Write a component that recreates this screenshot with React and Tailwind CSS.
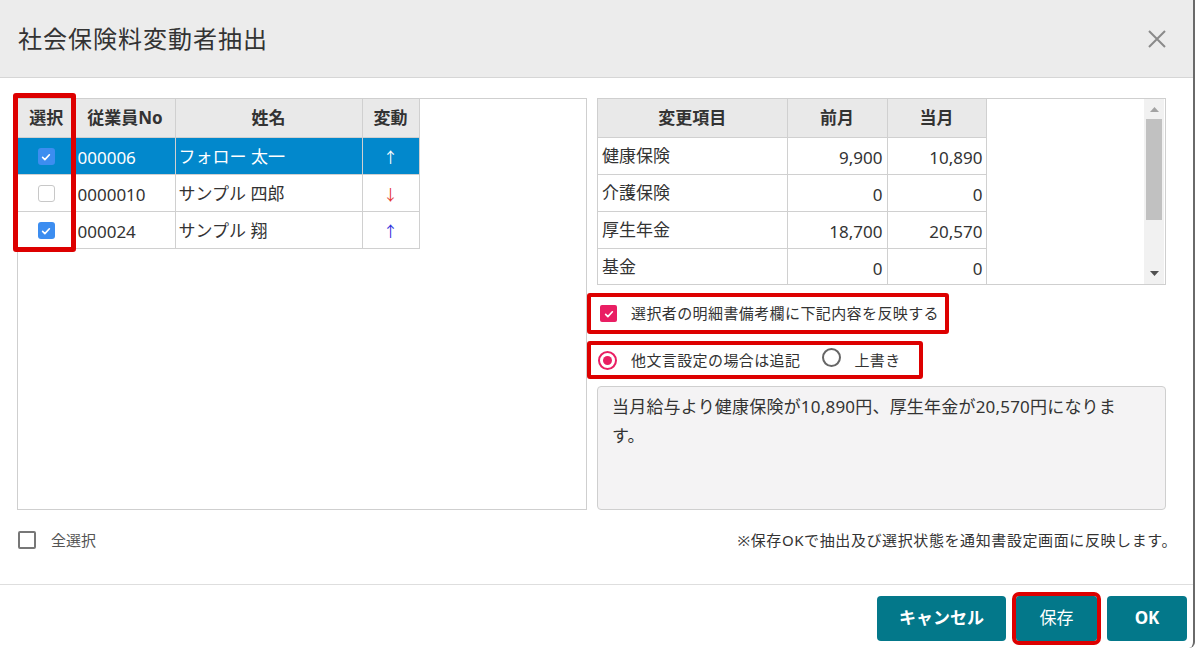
import React from "react";

const employees = [
  { no: "000006", name: "フォロー 太一", dir: "up", checked: true, selected: true },
  { no: "0000010", name: "サンプル 四郎", dir: "down", checked: false, selected: false },
  { no: "000024", name: "サンプル 翔", dir: "up", checked: true, selected: false },
];

const changes = [
  { item: "健康保険", prev: "9,900", cur: "10,890" },
  { item: "介護保険", prev: "0", cur: "0" },
  { item: "厚生年金", prev: "18,700", cur: "20,570" },
  { item: "基金", prev: "0", cur: "0" },
];

const Check = ({ color = "#3c8df0", size = "w-[17px] h-[17px]", radius = "rounded-[3px]" }) => (
  <span className={`inline-flex ${size} ${radius} items-center justify-center`} style={{ backgroundColor: color }}>
    <svg viewBox="0 0 16 16" className="w-[12px] h-[12px]">
      <path d="M3.5 8.5l3 3L12.5 5" stroke="white" strokeWidth="2.2" fill="none" strokeLinecap="round" strokeLinejoin="round" />
    </svg>
  </span>
);

const Radio = ({ on }) =>
  on ? (
    <span className="inline-flex w-[19px] h-[19px] rounded-full border-2 border-[#e91e63] items-center justify-center">
      <span className="w-[9px] h-[9px] rounded-full bg-[#e91e63]" />
    </span>
  ) : (
    <span className="inline-block w-[19px] h-[19px] rounded-full border-2 border-[#666]" />
  );

const App = () => {
  return (
    <div className="w-[1198px] h-[650px] bg-white [font-family:'Noto_Sans','Noto_Sans_CJK_JP',sans-serif] text-[#333]">
      <div className="w-[1195px] h-[648px] bg-white border-r-2 border-[#6a6a6a] rounded-br-[6px] flex flex-col overflow-hidden">
        {/* Header */}
        <div className="h-[78px] shrink-0 bg-[#ececec] border-b border-[#d6d6d6] flex items-center justify-between pl-[18px] pr-[27px]">
          <h1 className="text-[24px] tracking-[1px] text-[#333] font-normal">社会保険料変動者抽出</h1>
          <svg viewBox="0 0 18 18" className="w-[18px] h-[18px]">
            <path d="M1 1L17 17M17 1L1 17" stroke="#8a8a8a" strokeWidth="2" />
          </svg>
        </div>

        {/* Body */}
        <div className="flex-1 flex flex-col pt-[20px] pl-[17px] pr-[27px]">
          <div className="flex gap-[10px] h-[412px]">
            {/* Left: employee list */}
            <div className="relative w-[570px] border border-[#cfcfcf]">
              <table className="table-fixed border-collapse text-[17px]">
                <colgroup>
                  <col className="w-[57px]" />
                  <col className="w-[100px]" />
                  <col className="w-[187px]" />
                  <col className="w-[57px]" />
                </colgroup>
                <thead>
                  <tr className="h-[38px] bg-[#e9e9e9]">
                    <th className="border-r border-b border-[#d0d0d0] font-bold">選択</th>
                    <th className="border-r border-b border-[#d0d0d0] font-bold">従業員No</th>
                    <th className="border-r border-b border-[#d0d0d0] font-bold">姓名</th>
                    <th className="border-r border-b border-[#d0d0d0] font-bold">変動</th>
                  </tr>
                </thead>
                <tbody>
                  {employees.map((e, idx) => (
                    <tr key={idx} className={`h-[37px] ${e.selected ? "bg-[#0288cc] text-white" : "text-[#333]"}`}>
                      <td className="border-r border-b border-[#d0d0d0] text-center">
                        <div className="flex justify-center pt-[2px]">
                          {e.checked ? <Check /> : <span className="inline-block w-[17px] h-[17px] rounded-[3px] bg-white border border-[#c8c8c8]" />}
                        </div>
                      </td>
                      <td className="border-r border-b border-[#d0d0d0] pl-[2px] pt-[5px]">{e.no}</td>
                      <td className="border-r border-b border-[#d0d0d0] pl-[3px] pt-[2px]">{e.name}</td>
                      <td
                        className={`border-r border-b border-[#d0d0d0] text-center text-[15px] pt-[4px] ${
                          e.selected ? "text-white" : e.dir === "down" ? "text-[#e53935]" : "text-[#3333dd]"
                        }`}
                      >
                        {e.dir === "up" ? "↑" : "↓"}
                      </td>
                    </tr>
                  ))}
                </tbody>
              </table>
              <div className="absolute left-[-5px] top-[-6px] w-[63px] h-[159px] border-[5px] border-[#dd0000] rounded-[3px]" />
            </div>

            {/* Right column */}
            <div className="w-[569px] flex flex-col">
              <div className="h-[187px] border border-[#cfcfcf] flex overflow-hidden">
                <div className="flex-1 overflow-hidden">
                  <table className="table-fixed border-collapse text-[17px]">
                    <colgroup>
                      <col className="w-[189px]" />
                      <col className="w-[100px]" />
                      <col className="w-[99px]" />
                    </colgroup>
                    <thead>
                      <tr className="h-[38px] bg-[#e9e9e9]">
                        <th className="border-r border-b border-[#d0d0d0] font-bold">変更項目</th>
                        <th className="border-r border-b border-[#d0d0d0] font-bold">前月</th>
                        <th className="border-r border-b border-[#d0d0d0] font-bold">当月</th>
                      </tr>
                    </thead>
                    <tbody>
                      {changes.map((c, idx) => (
                        <tr key={idx} className="h-[37px]">
                          <td className="border-r border-b border-[#d0d0d0] pl-[4px]">{c.item}</td>
                          <td className="border-r border-b border-[#d0d0d0] text-right pr-[4px] pt-[4px]">{c.prev}</td>
                          <td className="border-r border-b border-[#d0d0d0] text-right pr-[3px] pt-[4px]">{c.cur}</td>
                        </tr>
                      ))}
                    </tbody>
                  </table>
                </div>
                {/* Scrollbar */}
                <div className="w-[20px] mr-[1px] bg-[#f1f1f1] flex flex-col">
                  <div className="h-[20px] flex items-center justify-center">
                    <svg width="9" height="5" viewBox="0 0 9 5">
                      <path d="M0 5L4.5 0L9 5Z" fill="#a3a3a3" />
                    </svg>
                  </div>
                  <div className="mx-[2px] h-[101px] bg-[#c1c1c1]" />
                  <div className="flex-1" />
                  <div className="h-[22px] flex items-center justify-center">
                    <svg width="9" height="5" viewBox="0 0 9 5">
                      <path d="M0 0L4.5 5L9 0Z" fill="#505050" />
                    </svg>
                  </div>
                </div>
              </div>

              <div className="mt-[8px] ml-[-10px] w-[362px] h-[41px] border-[4px] border-[#dd0000] rounded-[3px] flex items-center pl-[9px] gap-[14px]">
                <Check color="#e91e63" size="w-[17px] h-[17px]" radius="rounded-[2px]" />
                <span className="text-[15px] tracking-[0.4px] text-[#333]">選択者の明細書備考欄に下記内容を反映する</span>
              </div>

              <div className="mt-[7px] ml-[-10px] w-[336px] h-[38px] border-[4px] border-[#dd0000] rounded-[3px] flex items-center pl-[7px]">
                <Radio on />
                <span className="ml-[14px] text-[15px] tracking-[0.4px] text-[#333]">他文言設定の場合は追記</span>
                <span className="ml-[22px]">
                  <Radio />
                </span>
                <span className="ml-[13px] text-[15px] tracking-[0.4px] text-[#333]">上書き</span>
              </div>

              <div className="mt-[7px] h-[124px] border border-[#cfcfcf] rounded-[4px] bg-[#f4f3f4] px-[14px] pt-[5px] text-[17px] leading-[29px] tracking-[0.2px] text-[#333]">
                当月給与より健康保険が10,890円、厚生年金が20,570円になりま
                <br />
                す。
              </div>
            </div>
          </div>

          <div className="mt-[20px] mr-[-11px] h-[20px] flex items-center justify-between">
            <div className="flex items-center gap-[15px] pl-[1px]">
              <span className="inline-block w-[18px] h-[18px] rounded-[2px] border-2 border-[#777] bg-white" />
              <span className="text-[15px] text-[#555]">全選択</span>
            </div>
            <span className="text-[15px] tracking-[0.6px] text-[#333]">※保存OKで抽出及び選択状態を通知書設定画面に反映します。</span>
          </div>
        </div>

        {/* Footer */}
        <div className="h-[64px] shrink-0 border-t border-[#dedede] flex items-center justify-end gap-[10px] pr-[6px] pt-[3px]">
          <button className="w-[129px] h-[45px] rounded-[4px] bg-[#03788a] text-white text-[17px] font-bold">キャンセル</button>
          <button className="w-[81px] h-[45px] rounded-[3px] bg-[#03788a] text-white text-[17px] outline-[4px] outline-solid outline-[#dd0000]">
            保存
          </button>
          <button className="w-[80px] h-[45px] rounded-[4px] bg-[#03788a] text-white text-[17px] font-bold">OK</button>
        </div>
      </div>
    </div>
  );
};

export default App;
